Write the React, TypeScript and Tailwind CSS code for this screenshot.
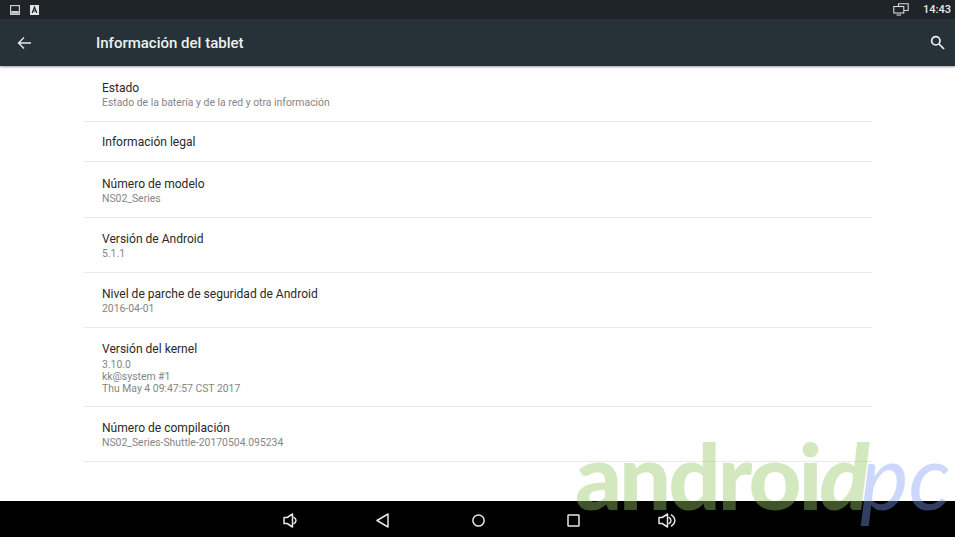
const rows: { title: string; lines: string[]; cls: string; gap?: string }[] = [
  { title: "Estado", lines: ["Estado de la batería y de la red y otra información"], cls: "pt-[14px] pb-[12px]" },
  { title: "Información legal", lines: [], cls: "pt-[12px] pb-[11px]" },
  { title: "Número de modelo", lines: ["NS02_Series"], cls: "pt-[14px] pb-[12px]" },
  { title: "Versión de Android", lines: ["5.1.1"], cls: "pt-[13px] pb-[12px]" },
  { title: "Nivel de parche de seguridad de Android", lines: ["2016-04-01"], cls: "pt-[13px] pb-[12px]" },
  { title: "Versión del kernel", lines: ["3.10.0", "kk@system #1", "Thu May 4 09:47:57 CST 2017"], cls: "pt-[13px] pb-[11px]", gap: "mt-[2px]" },
  { title: "Número de compilación", lines: ["NS02_Series-Shuttle-20170504.095234"], cls: "pt-[13px] pb-[12px]" },
];

function Speaker({ loud }: { loud?: boolean }) {
  return (
    <svg width={loud ? 18 : 15} height="15" viewBox={loud ? "0 0 18 15" : "0 0 15 15"} fill="none" stroke="#e6e6e6" strokeWidth="1.5" className={loud ? "ml-[78px]" : ""}>
      <path d="M1 4.5H4.2L9.5 1V14L4.2 10.5H1Z" strokeLinejoin="round" />
      <path d="M10.5 4.2C12.4 5.2 13 6.4 13 7.5C13 8.6 12.4 9.8 10.5 10.8" />
      {loud && <path d="M13 1.6C15.8 3.4 16.8 5.4 16.8 7.5C16.8 9.6 15.8 11.6 13 13.4" />}
    </svg>
  );
}

export default function App() {
  return (
    <div className="relative w-[955px] h-[537px] overflow-hidden flex flex-col bg-white font-['Roboto',sans-serif]">
      <div className="h-[19px] bg-[#1e2428] flex items-center pl-[10px] pr-[5px] text-white">
        <svg width="10" height="10" viewBox="0 0 10 10" className="mr-[10px]">
          <rect x="0" y="0" width="10" height="10" fill="#c9cbcc" />
          <rect x="1.2" y="1.2" width="7.6" height="7.6" fill="#1e2428" />
          <rect x="1.2" y="6" width="7.6" height="2.8" fill="#c9cbcc" />
        </svg>
        <svg width="9" height="10" viewBox="0 0 9 10" className="mr-auto">
          <rect width="9" height="10" fill="#e6e6e6" />
          <path d="M2.2 8L4.5 2.2L6.8 8M3.2 6H5.8" stroke="#1e2428" strokeWidth="1.2" fill="none" />
        </svg>
        <svg width="16" height="13" viewBox="0 0 16 13" fill="none" stroke="#d8d8d8" strokeWidth="1.1" className="mr-[14px]">
          <path d="M5.5 3V0.8H15.2V7.5H11" />
          <rect x="0.8" y="3.5" width="10" height="6.5" fill="#1e2428" />
          <path d="M3.5 12H8" />
        </svg>
        <span className="text-[11px] font-medium text-[#e8e8e8] leading-none w-[27px]">14:43</span>
      </div>
      <div className="h-[47px] bg-[#263238] flex items-center pl-[17px] pr-[10px] shadow-[0_1px_2px_rgba(0,0,0,0.4)] z-10">
        <svg width="15" height="14" viewBox="0 0 15 14" fill="none" stroke="#e8eaeb" strokeWidth="1.4" className="mr-[64px]">
          <path d="M14 7H1.5M7 1.5L1.5 7L7 12.5" />
        </svg>
        <span className="text-[15px] font-medium text-[#eef0f0] mr-auto pt-[2px]">Información del tablet</span>
        <svg width="15" height="15" viewBox="0 0 15 15" fill="none" stroke="#f0f0f0" strokeWidth="1.7">
          <circle cx="5.8" cy="5.8" r="4.2" />
          <path d="M9 9L14 14" />
        </svg>
      </div>
      <div className="flex-1 pl-[84px] pr-[83px] bg-white">
        {rows.map((r) => (
          <div key={r.title} className={`pl-[18px] border-b border-[#e9e9e9] ${r.cls}`}>
            <div className="text-[12.05px] leading-[16px] text-[#2a2a2a]">{r.title}</div>
            {r.lines.length > 0 && (
              <div className={`${r.gap ?? "mt-px"} text-[10.4px] leading-[12px] text-[#858585]`}>
                {r.lines.map((l) => (
                  <div key={l}>{l}</div>
                ))}
              </div>
            )}
          </div>
        ))}
      </div>
      <div className="h-[36px] bg-black flex items-center pl-[283px] pt-[2px]">
        <Speaker />
        <svg width="13" height="15" viewBox="0 0 13 15" fill="none" stroke="#e6e6e6" strokeWidth="1.5" className="ml-[78px]">
          <path d="M12 1V14L1 7.5Z" strokeLinejoin="round" />
        </svg>
        <svg width="13" height="13" viewBox="0 0 13 13" fill="none" stroke="#e6e6e6" strokeWidth="1.5" className="ml-[83px]">
          <circle cx="6.5" cy="6.5" r="5.6" />
        </svg>
        <svg width="13" height="13" viewBox="0 0 13 13" fill="none" stroke="#e6e6e6" strokeWidth="1.5" className="ml-[82px]">
          <rect x="1" y="1" width="11" height="11" rx="0.5" />
        </svg>
        <Speaker loud />
      </div>
      <div className="absolute left-[575px] top-[429px] flex items-baseline pointer-events-none font-['Lato',sans-serif] leading-none whitespace-nowrap">
        <span className="text-[92px] font-black tracking-[-3px] text-[rgba(152,200,105,0.42)]">androi</span>
        <span className="text-[92px] font-black italic text-[rgba(152,200,105,0.42)]">d</span>
      </div>
      <div className="absolute left-[860px] top-[429px] pointer-events-none font-['Lato',sans-serif] leading-none whitespace-nowrap">
        <span className="text-[92px] font-normal italic text-[rgba(128,158,245,0.4)]">pc</span>
      </div>
    </div>
  );
}
